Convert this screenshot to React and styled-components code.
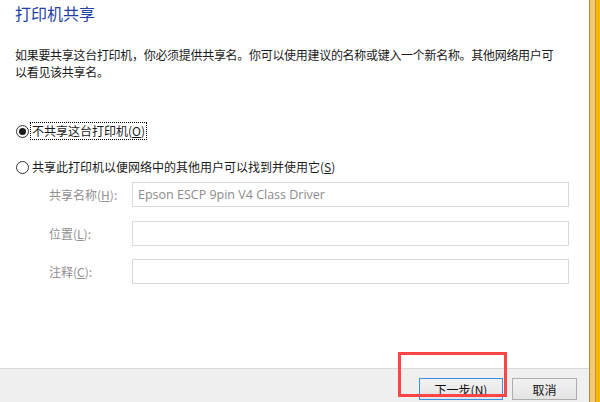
import styled, { createGlobalStyle } from 'styled-components'

const GlobalStyle = createGlobalStyle`
  html, body {
    margin: 0;
    padding: 0;
    overflow: hidden;
    background: #fff;
  }
  body {
    font-family: "Noto Sans CJK SC", "Noto Sans", sans-serif;
    font-size: 12px;
    color: #1a1a1a;
  }
`

function App() {
  const fields = [
    { label: '共享名称', key: 'H', value: 'Epson ESCP 9pin V4 Class Driver' },
    { label: '位置', key: 'L', value: '' },
    { label: '注释', key: 'C', value: '' },
  ]

  return (
    <Frame>
      <GlobalStyle />
      <Main>
        <Content>
          <Title>打印机共享</Title>
          <Intro>
            如果要共享这台打印机，你必须提供共享名。你可以使用建议的名称或键入一个新名称。其他网络用户可
            <br />
            以看见该共享名。
          </Intro>

          <Options>
            <Option>
              <Radio checked />
              <OptionText focused>
                不共享这台打印机(<u>O</u>)
              </OptionText>
            </Option>
            <Option>
              <Radio />
              <OptionText>
                共享此打印机以便网络中的其他用户可以找到并使用它(<u>S</u>)
              </OptionText>
            </Option>
          </Options>

          <Fields>
            {fields.map(f => (
              <FieldRow key={f.key}>
                <FieldLabel>
                  {f.label}(<u>{f.key}</u>):
                </FieldLabel>
                <FieldInput>{f.value}</FieldInput>
              </FieldRow>
            ))}
          </Fields>
        </Content>

        <Footer>
          <Button primary>
            下一步(<u>N</u>)
          </Button>
          <Button>取消</Button>
        </Footer>
      </Main>
      <Edge />
      <Highlight />
    </Frame>
  )
}

export default App

const Frame = styled.div`
  position: relative;
  display: flex;
  width: 600px;
  height: 402px;
`

const Main = styled.div`
  flex: 1;
  display: flex;
  flex-direction: column;
  background: #fff;
`

const Content = styled.div`
  flex: 1;
  padding: 2px 10px 0 15px;
`

const Title = styled.div`
  font-size: 16px;
  line-height: 22px;
  color: #2142a3;
`

const Intro = styled.p`
  margin: 22px 0 0;
  line-height: 17px;
  letter-spacing: -0.3px;
  white-space: nowrap;
`

const Options = styled.div`
  margin-top: 42px;
  display: flex;
  flex-direction: column;
  gap: 18px;
`

const Option = styled.label`
  display: flex;
  align-items: center;
  height: 18px;
  padding-left: 1px;
`

const Radio = styled.span`
  box-sizing: border-box;
  width: 13px;
  height: 13px;
  border: 1px solid #333;
  border-radius: 50%;
  background: #fff;
  display: flex;
  align-items: center;
  justify-content: center;
  margin-right: 2px;

  &::after {
    content: '';
    width: 7px;
    height: 7px;
    border-radius: 50%;
    background: ${p => (p.checked ? '#1a1a1a' : 'transparent')};
  }
`

const OptionText = styled.span`
  line-height: 16px;
  padding: 0 1px;
  outline: ${p => (p.focused ? '1px dotted #000' : 'none')};
  outline-offset: 0;
`

const Fields = styled.div`
  margin-top: 6px;
  padding-left: 34px;
  display: flex;
  flex-direction: column;
  gap: 13.5px;
`

const FieldRow = styled.div`
  display: grid;
  grid-template-columns: 83px 437px;
  align-items: center;
`

const FieldLabel = styled.span`
  color: #909090;
`

const FieldInput = styled.div`
  box-sizing: border-box;
  height: 25px;
  border: 1px solid #d9d9d9;
  padding: 0 5px;
  display: flex;
  align-items: center;
  font-family: "Open Sans", "Noto Sans", sans-serif;
  font-size: 12.5px;
  color: #8c8c8c;
`

const Footer = styled.div`
  box-sizing: border-box;
  height: 34px;
  border-top: 1px solid #dadada;
  background: #f0f0f0;
  display: flex;
  justify-content: flex-end;
  align-items: flex-start;
  gap: 9px;
  padding: 9px 12px 0 0;
`

const Button = styled.div`
  box-sizing: border-box;
  width: ${p => (p.primary ? '84px' : '65px')};
  height: 22px;
  border: 1px solid ${p => (p.primary ? '#3d8ee6' : '#adadad')};
  background: linear-gradient(#f2f2f2, #e4e4e4);
  display: flex;
  align-items: center;
  justify-content: center;
  color: #111;
`

const Edge = styled.div`
  width: 11px;
  background: linear-gradient(
    to right,
    #a98b4d 0 1px,
    #f2c96b 1px 6px,
    #b8923e 6px 7px,
    #f7b600 7px
  );
`

const Highlight = styled.div`
  position: absolute;
  left: 398px;
  top: 352px;
  width: 109px;
  height: 45px;
  box-sizing: border-box;
  border: 3px solid #ff4545;
  pointer-events: none;
`
